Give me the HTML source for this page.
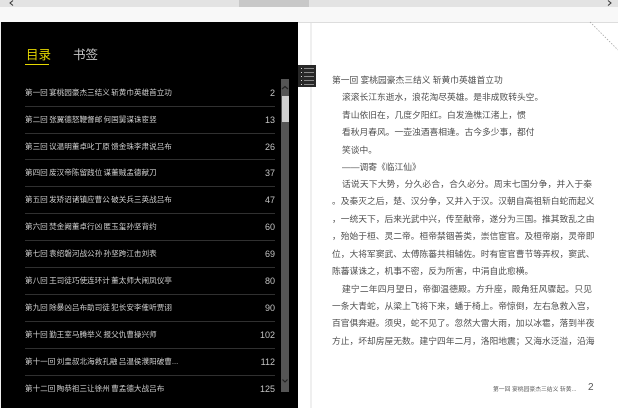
<!DOCTYPE html>
<html lang="zh">
<head>
<meta charset="utf-8">
<style>
html,body{margin:0;padding:0;background:#fff;}
#root{position:relative;width:618px;height:408px;overflow:hidden;background:#fff;font-family:"Liberation Sans","Noto Sans CJK TC",sans-serif;}
.a{position:absolute;}
.toc{position:absolute;left:25px;width:250px;height:14px;line-height:14px;font-size:7.6px;color:#d0d0d0;white-space:pre;word-spacing:-0.8px;filter:blur(0.25px);}
.toc b{position:absolute;right:0;top:0;font-weight:normal;font-size:9px;color:#c4c4c4;}
.sep{position:absolute;left:25px;width:250px;height:1px;background:#303030;}
.ln{position:absolute;height:14px;line-height:14px;font-size:8.75px;color:#4e4e4e;white-space:nowrap;filter:blur(0.25px);}
.j{text-align:justify;text-align-last:justify;}
.bar{position:absolute;left:304px;width:10px;height:1px;background:#8a8a8a;}
.dot{position:absolute;left:301px;width:1px;height:1px;background:#ddd;}
</style>
</head>
<body>
<div id="root">
<div class="a" style="left:0;top:0;width:618px;height:7px;background:#e3e3e3;"></div>
<div class="a" style="left:239px;top:0;width:70px;height:7px;background:#c8c8c8;"></div>
<div class="a" style="left:0;top:7px;width:618px;height:15px;background:#f8f8f8;"></div>
<div class="a" style="left:298px;top:22px;width:320px;height:1px;background:#ddd;"></div>
<svg class="a" style="left:8px;top:0" width="8" height="7"><path d="M5 0.5 L2 3 L5 5.5" fill="none" stroke="#333" stroke-width="1"/></svg>
<svg class="a" style="left:606px;top:0" width="8" height="7"><path d="M2 0.5 L5 3 L2 5.5" fill="none" stroke="#333" stroke-width="1"/></svg>

<div class="a" style="left:0;top:22px;width:1px;height:386px;background:#eee;"></div>
<div class="a" style="left:1px;top:22px;width:297px;height:386px;background:#000;"></div>
<div class="a" style="left:310px;top:23px;width:2px;height:385px;background:#efefef;"></div>

<svg class="a" style="left:588px;top:20px" width="30" height="32"><path d="M2 2 L30 30" stroke="#999" stroke-width="0.7" stroke-dasharray="1.5 1.5" fill="none"/></svg>

<div class="a" style="left:26px;top:47px;width:26px;height:16px;line-height:16px;font-size:12.5px;color:#e6d800;white-space:nowrap;">目录</div>
<div class="a" style="left:25px;top:64px;width:24px;height:1px;background:#e6d800;"></div>
<div class="a" style="left:73px;top:47px;width:28px;height:16px;line-height:16px;font-size:12.5px;color:#c8c8c8;white-space:nowrap;">书签</div>

<div class="toc" style="top:85.5px">第一回 宴桃园豪杰三结义 斩黄巾英雄首立功<b>2</b></div>
<div class="sep" style="top:106px"></div>
<div class="toc" style="top:112.5px">第二回 张翼德怒鞭督邮 何国舅谋诛宦竖<b>13</b></div>
<div class="sep" style="top:133px"></div>
<div class="toc" style="top:139.5px">第三回 议温明董卓叱丁原 馈金珠李肃说吕布<b>26</b></div>
<div class="sep" style="top:159px"></div>
<div class="toc" style="top:165.5px">第四回 废汉帝陈留践位 谋董贼孟德献刀<b>37</b></div>
<div class="sep" style="top:186px"></div>
<div class="toc" style="top:192.5px">第五回 发矫诏诸镇应曹公 破关兵三英战吕布<b>47</b></div>
<div class="sep" style="top:213px"></div>
<div class="toc" style="top:219.5px">第六回 焚金阙董卓行凶 匿玉玺孙坚背约<b>60</b></div>
<div class="sep" style="top:240px"></div>
<div class="toc" style="top:246.5px">第七回 袁绍磐河战公孙 孙坚跨江击刘表<b>69</b></div>
<div class="sep" style="top:267px"></div>
<div class="toc" style="top:273.5px">第八回 王司徒巧使连环计 董太师大闹凤仪亭<b>80</b></div>
<div class="sep" style="top:294px"></div>
<div class="toc" style="top:300.5px">第九回 除暴凶吕布助司徒 犯长安李傕听贾诩<b>90</b></div>
<div class="sep" style="top:321px"></div>
<div class="toc" style="top:327.5px">第十回 勤王室马腾举义 报父仇曹操兴师<b>102</b></div>
<div class="sep" style="top:348px"></div>
<div class="toc" style="top:354.5px">第十一回 刘皇叔北海救孔融 吕温侯濮阳破曹...<b>112</b></div>
<div class="sep" style="top:375px"></div>
<div class="toc" style="top:381.5px">第十二回 陶恭祖三让徐州 曹孟德大战吕布<b>125</b></div>

<div class="a" style="left:281px;top:79px;width:8px;height:313px;background:#555;"></div>
<div class="a" style="left:282px;top:96px;width:7px;height:26px;background:#cfcfcf;"></div>
<svg class="a" style="left:281px;top:85px" width="8" height="6"><path d="M1 4 L4 1.5 L7 4" fill="none" stroke="#222" stroke-width="1.2"/></svg>
<svg class="a" style="left:281px;top:378px" width="8" height="6"><path d="M1.5 1.5 L4 4 L6.5 1.5" fill="none" stroke="#222" stroke-width="1.1"/></svg>

<div class="a" style="left:298px;top:65px;width:18px;height:22px;background:#282828;"></div>
<div class="bar" style="top:68px"></div><div class="bar" style="top:72px"></div><div class="bar" style="top:76px"></div><div class="bar" style="top:80px"></div><div class="bar" style="top:84px"></div>
<div class="dot" style="top:68px"></div><div class="dot" style="top:72px"></div><div class="dot" style="top:76px"></div><div class="dot" style="top:80px"></div><div class="dot" style="top:84px"></div>

<div class="ln" style="left:332px;top:72.5px;word-spacing:-0.2px;">第一回 宴桃园豪杰三结义 斩黄巾英雄首立功</div>
<div class="ln" style="left:342px;top:90px">滚滚长江东逝水，浪花淘尽英雄。是非成败转头空。</div>
<div class="ln" style="left:342px;top:108px">青山依旧在，几度夕阳红。白发渔樵江渚上，惯</div>
<div class="ln" style="left:342px;top:125px">看秋月春风。一壶浊酒喜相逢。古今多少事，都付</div>
<div class="ln" style="left:342px;top:143px">笑谈中。</div>
<div class="ln" style="left:342px;top:160px">——调寄《临江仙》</div>
<div class="ln j" style="left:342px;top:177px;width:250px">话说天下大势，分久必合，合久必分。周末七国分争，并入于秦</div>
<div class="ln j" style="left:332px;top:194px;width:262px">。及秦灭之后，楚、汉分争，又并入于汉。汉朝自高祖斩白蛇而起义</div>
<div class="ln j" style="left:332px;top:212px;width:262px">，一统天下，后来光武中兴，传至献帝，遂分为三国。推其致乱之由</div>
<div class="ln j" style="left:332px;top:229px;width:262px">，殆始于桓、灵二帝。桓帝禁锢善类，崇信宦官。及桓帝崩，灵帝即</div>
<div class="ln j" style="left:332px;top:247px;width:260px">位，大将军窦武、太傅陈蕃共相辅佐。时有宦官曹节等弄权，窦武、</div>
<div class="ln" style="left:332px;top:264px">陈蕃谋诛之，机事不密，反为所害，中涓自此愈横。</div>
<div class="ln j" style="left:342px;top:282px;width:250px">建宁二年四月望日，帝御温德殿。方升座，殿角狂风骤起。只见</div>
<div class="ln j" style="left:332px;top:299px;width:260px">一条大青蛇，从梁上飞将下来，蟠于椅上。帝惊倒，左右急救入宫，</div>
<div class="ln j" style="left:332px;top:316px;width:262px">百官俱奔避。须臾，蛇不见了。忽然大雷大雨，加以冰雹，落到半夜</div>
<div class="ln j" style="left:332px;top:334px;width:262px">方止，坏却房屋无数。建宁四年二月，洛阳地震；又海水泛溢，沿海</div>

<div class="a" style="left:493px;top:385px;height:10px;line-height:10px;font-size:5.8px;color:#5a5a5a;white-space:nowrap;">第一回 宴桃园豪杰三结义 斩黄...</div>
<div class="a" style="left:588px;top:381px;height:14px;line-height:14px;font-size:10px;color:#555;">2</div>
</div>
</body>
</html>
